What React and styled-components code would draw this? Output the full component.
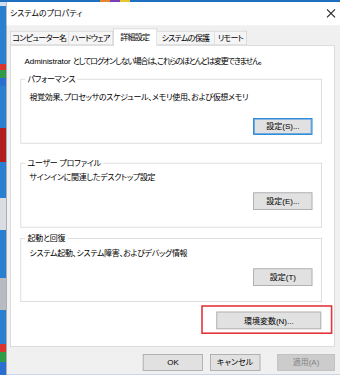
import styled, { createGlobalStyle } from 'styled-components'

// the dialog is laid out at 1.25x and scaled down, like the screenshot
const SCALE = 0.8
const u = v => `${v / SCALE}px`

const GlobalStyle = createGlobalStyle`
  html, body {
    margin: 0;
    padding: 0;
  }
  body {
    width: 340px;
    height: 375px;
    overflow: hidden;
    font-family: "Liberation Sans", "Noto Sans CJK JP", sans-serif;
    font-size: 10px;
    font-feature-settings: "palt";
    color: #000;
  }
`

const Desktop = styled.div`
  width: 340px;
  height: 375px;
  box-sizing: border-box;
  overflow: hidden;
  padding: 2px 0 0 6px;
  background:
    linear-gradient(to right, #1f6fc0 0 100px, #e8842a 100px 110px, #7b3fb5 110px 120px, #e8c52a 120px 130px, #1f6fc0 130px) top left / 100% 2px no-repeat,
    linear-gradient(to bottom,
      #cfe0f2 0 6px, #2a7fd0 6px 64px, #d8362c 64px 70px, #2f9a48 70px 78px, #2a6fd0 78px 86px,
      #2a7fd0 86px 128px, #b01e1e 128px 162px, #2a7fd0 162px 198px, #d9dde2 198px 230px,
      #2a7fd0 230px 278px, #b8bcc2 278px 310px, #2a7fd0 310px 344px,
      #d8362c 344px 352px, #2f9a48 352px 362px, #2a6fd0 362px) top left / 6px 100% no-repeat,
    #1f6fc0;
`

const Window = styled.div`
  width: ${u(334)};
  height: ${u(373)};
  box-sizing: border-box;
  transform: scale(${SCALE});
  transform-origin: top left;
  display: flex;
  flex-direction: column;
  background: #f0f0f0;
  border-left: ${u(1)} solid #9aa0a6;
`

const TitleBar = styled.div`
  height: ${u(23)};
  flex: none;
  display: flex;
  align-items: center;
  justify-content: space-between;
  padding: 0 ${u(4)} 0 ${u(3)};
  background: #fff;
`

const Title = styled.span`
  line-height: ${u(12)};
`

const CloseButton = styled.span`
  display: flex;
  width: ${u(10)};
  height: ${u(10)};
  align-items: center;
  justify-content: center;
`

const Body = styled.div`
  flex: 1;
  display: flex;
  flex-direction: column;
  padding: ${u(6)} ${u(5)} 0 ${u(3)};
`

const TabStrip = styled.div`
  display: flex;
  align-items: flex-end;
  height: ${u(14)};
  position: relative;
  z-index: 1;
`

const Tab = styled.div`
  width: ${p => u(p.$width)};
  height: ${p => u(p.$active ? 18 : 14)};
  box-sizing: border-box;
  display: flex;
  align-items: center;
  justify-content: center;
  border: ${u(1)} solid #d4d4d4;
  border-bottom: ${p => (p.$active ? 'none' : `${u(1)} solid #d4d4d4`)};
  border-left: ${p => (p.$first || p.$active ? `${u(1)} solid #d4d4d4` : 'none')};
  background: ${p => (p.$active ? '#fff' : '#f5f5f5')};
  margin-bottom: ${p => (p.$active ? u(-1) : '0')};
  line-height: ${u(12)};
  letter-spacing: -0.9px;
  white-space: nowrap;
`

const Panel = styled.div`
  height: ${u(302)};
  box-sizing: border-box;
  display: flex;
  flex-direction: column;
  background: #fff;
  border: ${u(1)} solid #d4d4d4;
  padding: ${u(9)} ${u(12)} 0 ${u(10)};
`

const Note = styled.div`
  line-height: ${u(12)};
  padding-left: ${u(4)};
  letter-spacing: -1.45px;
  white-space: nowrap;
`

const Latin = styled.span`
  letter-spacing: -0.1px;
  margin-right: ${u(2)};
`

const Group = styled.div`
  position: relative;
  height: ${p => u(p.$height)};
  box-sizing: border-box;
  margin-top: ${p => u(p.$gap)};
  border: ${u(1)} solid #d6d6d6;
  padding: ${p => u(p.$pad)} ${u(9)} 0 ${u(8)};
`

const Legend = styled.span`
  position: absolute;
  top: ${u(-6.5)};
  left: ${u(4)};
  padding: 0 ${u(2)};
  background: #fff;
  line-height: ${u(12)};
  letter-spacing: -0.3px;
  white-space: nowrap;
`

const Description = styled.div`
  line-height: ${u(12)};
  letter-spacing: -0.4px;
  white-space: nowrap;
`

const ButtonRow = styled.div`
  display: flex;
  justify-content: flex-end;
  margin-top: ${p => u(p.$gap)};
`

const Button = styled.div`
  width: ${p => u(p.$width)};
  height: ${u(17)};
  box-sizing: border-box;
  display: flex;
  align-items: center;
  justify-content: center;
  background: ${p => (p.$disabled ? '#cccccc' : '#e1e1e1')};
  color: ${p => (p.$disabled ? '#838383' : '#000')};
  border: ${u(1)} solid ${p => (p.$focused ? '#0078d7' : p.$disabled ? '#bfbfbf' : '#a5a5a5')};
  box-shadow: ${p => (p.$focused ? `inset 0 0 0 ${u(1)} #6fa8e0` : 'none')};
  line-height: ${u(12)};
  white-space: nowrap;
`

const Highlight = styled.div`
  align-self: flex-end;
  width: ${u(131)};
  height: ${u(29)};
  box-sizing: border-box;
  margin: ${u(3)} ${u(-10)} 0 0;
  padding: ${u(5.5)} 0 0 ${u(13.5)};
  border: 2px solid #e2363c;
`

const Footer = styled.div`
  display: flex;
  justify-content: flex-end;
  padding-top: ${u(7)};
`

const FooterButton = styled(Button)`
  margin-left: ${p => u(p.$gap)};
`

const App = () => {
  return (
    <Desktop>
      <GlobalStyle />
      <Window>
        <TitleBar>
          <Title>システムのプロパティ</Title>
          <CloseButton>
            <svg width="100%" height="100%" viewBox="0 0 10 10">
              <path d="M1 1 L9 9 M9 1 L1 9" stroke="#222" strokeWidth="1.1" fill="none" />
            </svg>
          </CloseButton>
        </TitleBar>
        <Body>
          <TabStrip>
            <Tab $width={59} $first>コンピューター名</Tab>
            <Tab $width={44}>ハードウェア</Tab>
            <Tab $width={44} $active>詳細設定</Tab>
            <Tab $width={58}>システムの保護</Tab>
            <Tab $width={32}>リモート</Tab>
          </TabStrip>
          <Panel>
            <Note><Latin>Administrator</Latin>としてログオンしない場合は、これらのほとんどは変更できません。</Note>

            <Group $height={65} $gap={12} $pad={12}>
              <Legend>パフォーマンス</Legend>
              <Description>視覚効果、プロセッサのスケジュール、メモリ使用、および仮想メモリ</Description>
              <ButtonRow $gap={14}>
                <Button $width={59} $focused>設定(S)...</Button>
              </ButtonRow>
            </Group>

            <Group $height={65} $gap={19} $pad={8}>
              <Legend>ユーザー プロファイル</Legend>
              <Description>サインインに関連したデスクトップ設定</Description>
              <ButtonRow $gap={9}>
                <Button $width={59}>設定(E)...</Button>
              </ButtonRow>
            </Group>

            <Group $height={64} $gap={10} $pad={9}>
              <Legend>起動と回復</Legend>
              <Description>システム起動、システム障害、およびデバッグ情報</Description>
              <ButtonRow $gap={9}>
                <Button $width={59}>設定(T)</Button>
              </ButtonRow>
            </Group>

            <Highlight>
              <Button $width={105}>環境変数(N)...</Button>
            </Highlight>
          </Panel>
          <Footer>
            <FooterButton $width={60} $gap={0}>OK</FooterButton>
            <FooterButton $width={50} $gap={7}>キャンセル</FooterButton>
            <FooterButton $width={58} $gap={17} $disabled>適用(A)</FooterButton>
          </Footer>
        </Body>
      </Window>
    </Desktop>
  )
}

export default App
